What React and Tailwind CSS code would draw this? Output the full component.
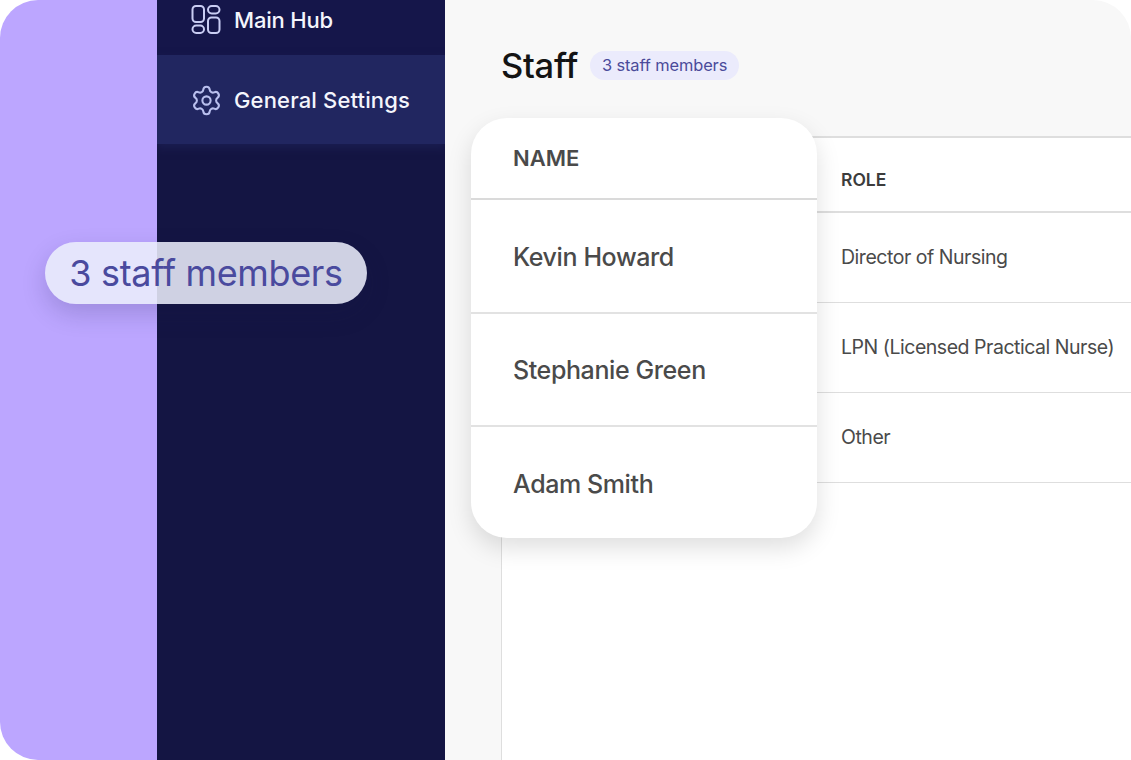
import { Settings } from 'lucide-react'

const ROLES = ['Director of Nursing', 'LPN (Licensed Practical Nurse)', 'Other']
const NAMES = ['Kevin Howard', 'Stephanie Green', 'Adam Smith']

function HubIcon() {
  return (
    <svg width="30" height="30" viewBox="0 0 30 30" fill="none" stroke="#c9cdf3" strokeWidth="2">
      <rect x="1.5" y="1" width="11.5" height="16" rx="3.5" />
      <rect x="17" y="1" width="11.5" height="7.5" rx="3.75" />
      <rect x="1.5" y="20.5" width="11.5" height="7.5" rx="3.75" />
      <rect x="17" y="12.5" width="11.5" height="15.5" rx="3.5" />
    </svg>
  )
}

export default function App() {
  return (
    <div className="relative flex h-[760px] w-[1131px] overflow-hidden bg-white font-['Inter',sans-serif]">
      {/* purple strip */}
      <div className="w-[157px] shrink-0 rounded-l-[38px] bg-[#bca6ff]" />

      {/* Sidebar */}
      <aside className="w-[288px] shrink-0 overflow-hidden bg-[#141543]">
        <div className="flex h-[55px] items-center gap-[13px] bg-[#15164a] pb-[15px] pl-[34px]">
          <HubIcon />
          <span className="text-[22px] font-medium tracking-[-0.2px] text-[#f4f5fc]">Main Hub</span>
        </div>
        <div className="flex h-[89px] items-center gap-[11px] bg-[#212660] pt-[1px] pl-[33px] shadow-[0_4px_8px_rgba(33,38,96,0.5)]">
          <Settings size={33} strokeWidth={1.5} className="text-[#b9bfee]" />
          <span className="text-[22px] font-medium tracking-[0.15px] text-[#f4f5fc]">General Settings</span>
        </div>
      </aside>

      {/* Main */}
      <main className="flex flex-1 flex-col rounded-tr-[38px] bg-[#f8f8f8] pl-[56px]">
        <div className="flex h-[136px] items-center gap-[12px] pb-[5px]">
          <h1 className="text-[34.5px] font-medium tracking-[-0.3px] text-[#141414]">Staff</h1>
          <span className="flex h-[29px] w-[149px] items-center justify-center rounded-full bg-[#ebebfc] text-[16.4px] tracking-[-0.1px] text-[#4a4a9a]">
            3 staff members
          </span>
        </div>
        <div className="flex-1 border-l border-t-2 border-[#dedede] bg-white">
          <div className="flex h-[75px] items-center border-b-2 border-[#dedede] pl-[339px] pt-[11px] text-[17.5px] font-semibold text-[#3c3c3c]">ROLE</div>
          {ROLES.map(role => (
            <div key={role} className="flex h-[90px] items-center whitespace-nowrap border-b border-[#dedede] pl-[339px] text-[19.5px] tracking-[-0.47px] text-[#4a4a4a]">
              {role}
            </div>
          ))}
        </div>
      </main>

      {/* Floating name card */}
      <div className="absolute left-[471px] top-[118px] w-[346px] rounded-[36px] bg-white text-[#4a4a4a] shadow-[0_10px_24px_rgba(0,0,0,0.13)]">
        <div className="flex h-[82px] items-center border-b-2 border-[#dadada] pl-[42px] text-[22px] font-semibold">NAME</div>
        {NAMES.map((name, i) => (
          <div key={name} className={i < 2 ? 'flex h-[113.5px] items-center border-b-2 border-[#e2e2e2] pl-[42px] pt-[3px] text-[25px] font-medium tracking-[-0.4px]' : 'flex h-[111px] items-center pl-[42px] pt-[4px] text-[25px] font-medium tracking-[-0.4px]'}>
            {name}
          </div>
        ))}
      </div>

      {/* Floating badge */}
      <div className="absolute left-[45px] top-[242px] flex h-[62px] w-[322px] items-center justify-center rounded-full bg-[rgba(235,238,252,0.87)] text-[36px] tracking-[-0.35px] text-[#4a4a9e] shadow-[0_10px_24px_rgba(20,20,70,0.18)]">
        3 staff members
      </div>
    </div>
  )
}
